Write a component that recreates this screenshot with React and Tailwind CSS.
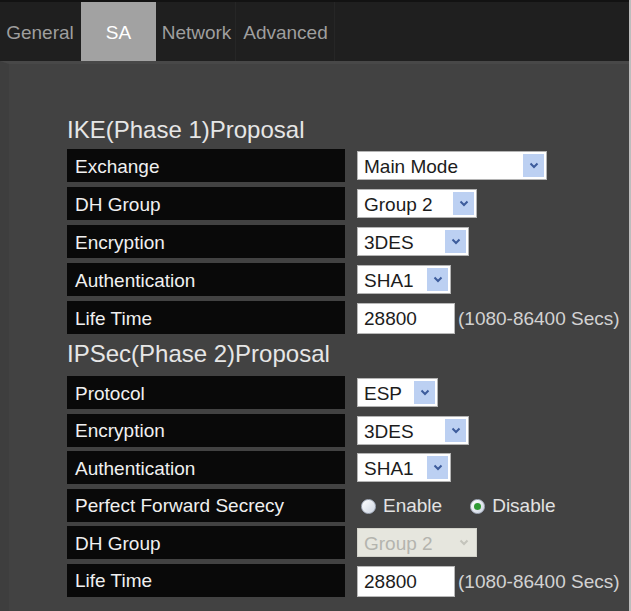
import React from "react";

const font = { fontFamily: '"Liberation Sans", Arial, sans-serif' };

function Chevron({ color = "#3d5c9c" }) {
  return (
    <svg width="10" height="7" viewBox="0 0 10 7">
      <polyline points="1.5,1.5 5,5 8.5,1.5" fill="none" stroke={color} strokeWidth="2" />
    </svg>
  );
}

function Select({ value, widthClass, disabled }) {
  return (
    <div
      className={`${widthClass} h-[29px] flex items-center border ${
        disabled ? "bg-[#e6e6de] border-[#d2d2ca] text-[#b4b4ae]" : "bg-white border-[#b4b4b4] text-[#1c1c1c]"
      }`}
    >
      <span className="flex-1 pl-[6px] pt-[2px] text-[19px] leading-none">{value}</span>
      <div
        className={`w-[21px] h-[23px] mr-[2px] flex items-center justify-center ${
          disabled ? "bg-[#e6e6de]" : "bg-[#bcd0f2]"
        }`}
      >
        <Chevron color={disabled ? "#c4c4bc" : "#3d5c9c"} />
      </div>
    </div>
  );
}

function TimeInput() {
  return (
    <div className="flex items-center pt-[2px]">
      <div className="w-[98px] h-[31px] bg-white border border-[#b8b8b8] flex items-center pl-[6px] pt-[2px] text-[19px] text-[#1c1c1c]">
        28800
      </div>
      <span className="ml-[3px] pt-[2px] text-[19px] text-[#d2d2d2]">(1080-86400 Secs)</span>
    </div>
  );
}

function Radio({ checked }) {
  return (
    <div className="w-[15px] h-[15px] rounded-full border border-[#a9b2c2] bg-gradient-to-br from-white to-[#cdd5e2] flex items-center justify-center">
      {checked && <div className="w-[7px] h-[7px] rounded-full bg-[#2f9a34]" />}
    </div>
  );
}

function Row({ label, children, gapClass }) {
  return (
    <div className={`flex items-center h-[33px] ${gapClass}`}>
      <div className="w-[278px] h-full bg-[#090909] flex items-center pl-[8px] pt-[3px] text-[19px] text-[#f0f0f0]">
        {label}
      </div>
      <div className="ml-[12px] flex items-center">{children}</div>
    </div>
  );
}

export default function App() {
  return (
    <div style={font} className="w-[631px] min-h-[611px] bg-[#424242] border-r-2 border-[#bdbdbd] flex flex-col">
      <div className="h-[61px] bg-[#1f1f1f] border-t-2 border-[#121212] flex items-stretch text-[19px] text-[#9e9e9e]">
        <div className="w-[80px] pt-[3px] flex items-center justify-center">General</div>
        <div className="w-[75px] ml-[1px] pt-[3px] bg-[#a2a2a2] text-white flex items-center justify-center">SA</div>
        <div className="w-[78px] ml-[2px] pt-[3px] flex items-center justify-center border-r border-[#262626]">Network</div>
        <div className="w-[98px] ml-[1px] pt-[3px] flex items-center justify-center border-r border-[#262626]">Advanced</div>
      </div>
      <div className="flex-1 border-t-[3px] border-[#484848] border-l-[9px] border-l-[#3e3e3e] pl-[58px] pt-[50px] pb-[12px]">
        <div className="h-[32px] flex items-center text-[24px] text-[#e6e6e6] mb-[3px]">IKE(Phase 1)Proposal</div>
        <Row label="Exchange" gapClass="">
          <Select value="Main Mode" widthClass="w-[190px]" />
        </Row>
        <Row label="DH Group" gapClass="mt-[5px]">
          <Select value="Group 2" widthClass="w-[120px]" />
        </Row>
        <Row label="Encryption" gapClass="mt-[5px]">
          <Select value="3DES" widthClass="w-[112px]" />
        </Row>
        <Row label="Authentication" gapClass="mt-[5px]">
          <Select value="SHA1" widthClass="w-[94px]" />
        </Row>
        <Row label="Life Time" gapClass="mt-[5px]">
          <TimeInput />
        </Row>
        <div className="h-[32px] mt-[4px] mb-[6px] flex items-center text-[24px] text-[#e6e6e6]">IPSec(Phase 2)Proposal</div>
        <Row label="Protocol" gapClass="">
          <Select value="ESP" widthClass="w-[81px]" />
        </Row>
        <Row label="Encryption" gapClass="mt-[4.5px]">
          <Select value="3DES" widthClass="w-[112px]" />
        </Row>
        <Row label="Authentication" gapClass="mt-[4.5px]">
          <Select value="SHA1" widthClass="w-[94px]" />
        </Row>
        <Row label="Perfect Forward Secrecy" gapClass="mt-[4.5px]">
          <div className="flex items-center text-[19px] text-[#e2e2e2] ml-[4px] pt-[3px]">
            <Radio />
            <span className="ml-[7px]">Enable</span>
            <div className="ml-[28px]">
              <Radio checked />
            </div>
            <span className="ml-[7px]">Disable</span>
          </div>
        </Row>
        <Row label="DH Group" gapClass="mt-[4.5px]">
          <Select value="Group 2" widthClass="w-[120px]" disabled />
        </Row>
        <Row label="Life Time" gapClass="mt-[4.5px]">
          <TimeInput />
        </Row>
      </div>
    </div>
  );
}
